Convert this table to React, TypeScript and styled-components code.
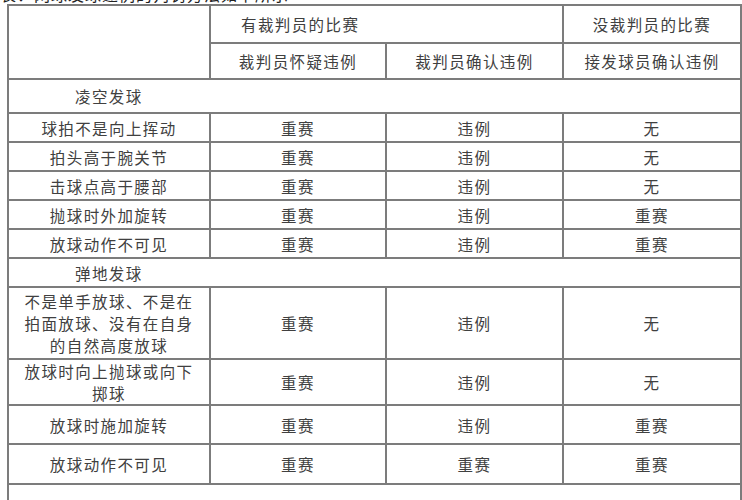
import styled, { createGlobalStyle } from "styled-components"

const GlobalStyle = createGlobalStyle`
  html, body {
    margin: 0;
    padding: 0;
    background: #fff;
  }
  body {
    font-family: "Noto Sans CJK SC", "Liberation Serif", serif;
    color: #404040;
  }
`

const Page = styled.div`
  width: 742px;
  height: 500px;
  overflow: hidden;
  padding-left: 7px;
  box-sizing: border-box;
`

// the caption above the table is almost entirely cropped in the shot
const Caption = styled.div`
  height: 4px;
  overflow: hidden;
  margin-left: -7px;
`

const CaptionText = styled.div`
  margin-top: -15px;
  font-size: 16px;
  line-height: 18px;
  color: #222;
  letter-spacing: 1px;
  white-space: nowrap;
`

const Table = styled.table`
  border-collapse: collapse;
  table-layout: fixed;
  width: 733px;
  font-size: 15.5px;
  letter-spacing: 1.4px;
`

const Row = styled.tr<{ $h: number }>`
  height: ${(p) => p.$h}px;
`

const Cell = styled.td<{ $align?: "left" | "center"; $pad?: number }>`
  border: 2px solid #7c7c7c;
  padding: 0 0 0 ${(p) => p.$pad ?? 0}px;
  text-align: ${(p) => p.$align ?? "center"};
  vertical-align: middle;
  line-height: 22px;
  font-weight: 400;
  white-space: nowrap;
`

const Section = styled.td`
  border: 2px solid #7c7c7c;
  padding-left: 66px;
  text-align: left;
  vertical-align: middle;
`

type Line = { label: string[]; h: number; vals: [string, string, string] }

const volley: Line[] = [
  { label: ["球拍不是向上挥动"], h: 29, vals: ["重赛", "违例", "无"] },
  { label: ["拍头高于腕关节"], h: 29, vals: ["重赛", "违例", "无"] },
  { label: ["击球点高于腰部"], h: 29, vals: ["重赛", "违例", "无"] },
  { label: ["抛球时外加旋转"], h: 29, vals: ["重赛", "违例", "重赛"] },
  { label: ["放球动作不可见"], h: 29, vals: ["重赛", "违例", "重赛"] },
]

const drop: Line[] = [
  {
    label: ["不是单手放球、不是在", "拍面放球、没有在自身", "的自然高度放球"],
    h: 72,
    vals: ["重赛", "违例", "无"],
  },
  { label: ["放球时向上抛球或向下", "掷球"], h: 45, vals: ["重赛", "违例", "无"] },
  { label: ["放球时施加旋转"], h: 39, vals: ["重赛", "违例", "重赛"] },
  { label: ["放球动作不可见"], h: 40, vals: ["重赛", "重赛", "重赛"] },
]

const renderLines = (lines: Line[]) =>
  lines.map((l, i) => (
    <Row $h={l.h} key={i}>
      <Cell>
        {l.label.map((t, j) => (
          <div key={j}>{t}</div>
        ))}
      </Cell>
      {l.vals.map((v, j) => (
        <Cell key={j}>{v}</Cell>
      ))}
    </Row>
  ))

export default function App() {
  return (
    <Page>
      <GlobalStyle />
      <Caption>
        <CaptionText>表：网球发球违例的判罚方法如下所示</CaptionText>
      </Caption>
      <Table>
        <colgroup>
          <col style={{ width: 202 }} />
          <col style={{ width: 176 }} />
          <col style={{ width: 177 }} />
          <col style={{ width: 178 }} />
        </colgroup>
        <tbody>
          <Row $h={38}>
            <Cell rowSpan={2} />
            <Cell colSpan={2} $align="left" $pad={30}>
              有裁判员的比赛
            </Cell>
            <Cell>没裁判员的比赛</Cell>
          </Row>
          <Row $h={36}>
            <Cell>裁判员怀疑违例</Cell>
            <Cell>裁判员确认违例</Cell>
            <Cell>接发球员确认违例</Cell>
          </Row>
          <Row $h={34}>
            <Section colSpan={4}>凌空发球</Section>
          </Row>
          {renderLines(volley)}
          <Row $h={29}>
            <Section colSpan={4}>弹地发球</Section>
          </Row>
          {renderLines(drop)}
          <Row $h={40}>
            <Section colSpan={4} />
          </Row>
        </tbody>
      </Table>
    </Page>
  )
}
